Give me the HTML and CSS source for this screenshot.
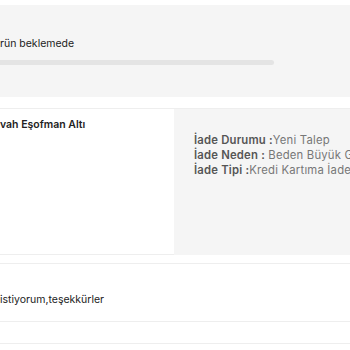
FILE: index.html
```html
<!DOCTYPE html>
<html lang="tr">
<head>
    <meta charset="UTF-8">
    <meta name="viewport" content="width=device-width, initial-scale=1.0">
    <title>İade Detayı</title>
    <link rel="stylesheet" href="styles.css">
</head>
<body>
    <div class="status-box">
        <p class="status-text">rün beklemede</p>
        <div class="progress"></div>
    </div>

    <div class="product-row">
        <div class="product-cell">
            <p class="product-name">vah Eşofman Altı</p>
        </div>
        <div class="info-cell">
            <p><b>İade Durumu :</b>Yeni Talep</p>
            <p><b>İade Neden :</b> Beden Büyük Geldi</p>
            <p><b>İade Tipi :</b>Kredi Kartıma İade</p>
        </div>
    </div>

    <div class="note-box">
        <p class="note-text">istiyorum,teşekkürler</p>
    </div>
    <div class="end-line"></div>
</body>
</html>
```

FILE: styles.css
```css
body {
    font-family: Inter, "Noto Sans", sans-serif;
    margin: 0;
    padding: 0;
    background: #fff;
    color: #222;
    overflow: hidden;
}

p {
    margin: 0;
}

.status-box {
    margin-top: 5px;
    height: 92px;
    background: #f5f5f5;
    padding-top: 32px;
    box-sizing: border-box;
}

.status-text {
    font-size: 10.5px;
    line-height: 14px;
}

.progress {
    width: 274px;
    height: 5px;
    margin-top: 9px;
    background: #e4e4e4;
    border-radius: 0 3px 3px 0;
}

.product-row {
    display: flex;
    margin-top: 11px;
    border-top: 1px solid #eee;
    height: 146px;
}

.product-cell {
    width: 174px;
    padding-top: 9px;
    border-bottom: 1px solid #eee;
    box-sizing: border-box;
}

.product-name {
    font-size: 10.5px;
    font-weight: 600;
    line-height: 14px;
}

.info-cell {
    flex: 1;
    background: #f5f5f5;
    padding: 24px 0 0 20px;
    font-size: 11.3px;
    letter-spacing: 0.2px;
    line-height: 15px;
    color: #777;
    white-space: nowrap;
    overflow: hidden;
}

.info-cell p {
    height: 15px;
}

.info-cell b {
    color: #555;
    font-weight: 600;
}

.note-box {
    margin-top: 8px;
    border-top: 1px solid #eee;
    border-bottom: 1px solid #eee;
    height: 59px;
    padding-top: 29px;
    box-sizing: border-box;
}

.note-text {
    font-size: 10.5px;
    line-height: 14px;
}

.end-line {
    margin-top: 21px;
    border-top: 1px solid #eee;
}
```
